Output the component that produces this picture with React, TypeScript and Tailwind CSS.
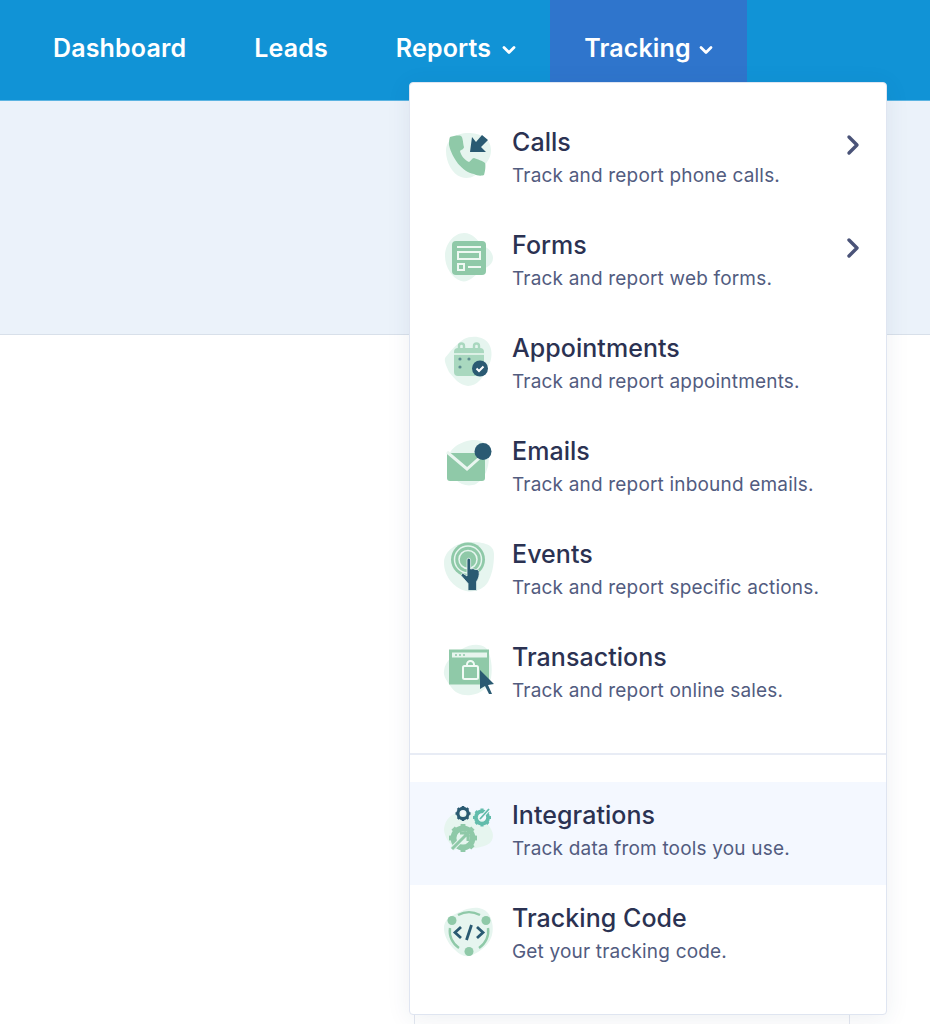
import React from "react";

const font = { fontFamily: "Inter, 'Noto Sans', sans-serif" };
const G = "#8fc9a8";
const D = "#2a5a72";
const B = "#e6f5ef";

const Chevron = ({ className }: { className: string }) => (
  <svg width="14" height="10" viewBox="0 0 14 10" className={className} fill="none" stroke="white" strokeWidth="2.8" strokeLinecap="round" strokeLinejoin="round">
    <path d="M2 2.5 L7 7.5 L12 2.5" />
  </svg>
);

const Right = () => (
  <svg width="16" height="22" viewBox="0 0 16 22" fill="none" stroke="#4a5378" strokeWidth="3.4" strokeLinecap="round" strokeLinejoin="round">
    <path d="M4 3 L12 11 L4 19" />
  </svg>
);

const Svg = ({ children }: { children: React.ReactNode }) => (
  <svg width="50" height="50" viewBox="0 0 50 50" className="overflow-visible">
    {children}
  </svg>
);

const Phone = () => (
  <Svg>
    <path d="M2 20C2 9 12 2 24 2c12 0 23 5 23 17 0 9-5 13-10 20-5 6-12 10-20 7C8 43 2 31 2 20z" fill={B} />
    <path d="M6 6c3-1 9-2 11-1 2 1 2 8 3 11 0 2-3 3-4 4 1 5 5 9 9 11 2-1 3-4 5-4 3 1 9 3 11 5 1 3 0 9-1 12-2 1-7 1-10-1C18 41 8 27 5 14c0-3 0-6 1-8z" fill={G} />
    <path d="M38 4l6 5-7 7 5 5H26l2-15 4 5z" fill={D} />
  </Svg>
);

const Form = () => (
  <Svg>
    <path d="M1 22C1 10 10 -1 20 -1c9 0 13 7 17 11 5 3 12 7 12 14 0 8-9 10-14 14-5 5-11 11-18 9C8 44 1 33 1 22z" fill={B} />
    <rect x="8" y="7" width="34" height="34" rx="4" fill={G} />
    <path d="M13 13h24" stroke="#eef8f2" strokeWidth="2" />
    <rect x="14" y="18" width="22" height="7" fill="none" stroke="#eef8f2" strokeWidth="2" />
    <rect x="14" y="30" width="6" height="6" fill="none" stroke="#eef8f2" strokeWidth="2" />
    <path d="M24 33h13" stroke="#eef8f2" strokeWidth="2" />
  </Svg>
);

const Cal = () => (
  <Svg>
    <path d="M1 21C5 16 12 7 20 2c8-4 20-3 25 5 4 7 3 16-1 23-4 10-11 19-20 19-9-1-14-8-19-14C3 30 0 25 1 21z" fill={B} />
    <rect x="10" y="11" width="30" height="28" rx="4" fill="#a9d8bf" />
    <path d="M15 13V9a2.5 2.5 0 015 0v4M30 13V9a2.5 2.5 0 015 0v4" fill="none" stroke="#a9d8bf" strokeWidth="2.4" />
    <path d="M10 17h30" stroke="#eef8f2" strokeWidth="1.5" />
    <circle cx="16" cy="22" r="1.6" fill={D} opacity=".6" />
    <circle cx="25" cy="22" r="1.6" fill={D} opacity=".6" />
    <circle cx="16" cy="30" r="1.6" fill={D} opacity=".6" />
    <circle cx="36" cy="31.5" r="8" fill={D} />
    <path d="M32.5 31.5l2.5 2.5 4.5-4.5" fill="none" stroke="white" strokeWidth="2" />
  </Svg>
);

const Mail = () => (
  <Svg>
    <path d="M3 24C3 10 14 2 28 0c11-1 17 5 17 15 0 12-3 23-13 29-7 3-15 1-20-4C7 35 3 32 3 24z" fill={B} />
    <path d="M3 13l38 0v25a3 3 0 01-3 3H6a3 3 0 01-3-3z" fill={G} />
    <path d="M3 12l20 17L41 13" fill="none" stroke="#eaf6f0" strokeWidth="3" />
    <circle cx="39" cy="11.5" r="8.5" fill={D} />
  </Svg>
);

const Events = () => (
  <Svg>
    <path d="M0 20C0 7 14 -1 26 -1c10 0 24 1 24 12 0 12 -2 20-6 28-4 7-14 11-22 9C9 45 0 32 0 20z" fill={B} />
    <circle cx="24" cy="16.5" r="17" fill={G} />
    <circle cx="24" cy="16.5" r="13.5" fill="none" stroke="#e6f5ef" strokeWidth="1.5" />
    <circle cx="24" cy="16.5" r="9" fill="none" stroke="#e6f5ef" strokeWidth="1.5" />
    <path d="M23 17a1.8 1.8 0 013.6 0v9l2.5-.5 2 1 2.5 0 1.5 2c.5 4-.5 7-2.5 10v9H24v-7l-7-8 1.5-2.5 4.5 3z" fill={D} stroke="#e6f5ef" strokeWidth="0.8" />
  </Svg>
);

const Shop = () => (
  <Svg>
    <path d="M0 25C1 14 10 10 18 3c8-5 18-6 24-1 5 6 7 20 5 30-2 9-10 16-20 17-9 1-16-2-20-8C3 35 -1 30 0 25z" fill={B} />
    <rect x="5" y="3.5" width="40" height="35" fill={G} />
    <rect x="8" y="6.5" width="35" height="5" fill="#e8f5ee" />
    <circle cx="12" cy="9" r="1" fill={G} />
    <circle cx="16" cy="9" r="1" fill={G} />
    <circle cx="20" cy="9" r="1" fill={G} />
    <rect x="19" y="20" width="15" height="13" rx="1.5" fill="none" stroke="#f1faf5" strokeWidth="2" />
    <path d="M23 20v-1.5a3.5 3.5 0 017 0V20" fill="none" stroke="#f1faf5" strokeWidth="2" />
    <path d="M36 24l14 14-6 1 4 9-3 0-4-8-5 3z" fill={D} />
  </Svg>
);

const Gear = ({ x, y, r, c, hole }: { x: number; y: number; r: number; c: string; hole: string }) => (
  <g transform={`translate(${x} ${y})`}>
    <circle r={r * 0.68} fill="none" stroke={c} strokeWidth={r * 0.42} />
    {[0, 45, 90, 135, 180, 225, 270, 315].map((a) => (
      <rect key={a} x={-r * 0.17} y={-r} width={r * 0.34} height={r * 0.36} fill={c} transform={`rotate(${a})`} />
    ))}
    <circle r={r * 0.28} fill={hole} />
  </g>
);

const Integ = () => (
  <Svg>
    <path d="M0 25C1 15 8 9 16 8c10-2 20 2 26 10 6 7 10 14 4 21-8 6-20 5-29 6C9 46 0 34 0 25z" fill={B} />
    <Gear x={19} y={9.5} r={7.5} c={D} hole="#f4f8ff" />
    <Gear x={38} y={13.5} r={9} c="#62bcab" hole="#f4f8ff" />
    <path d="M36 15l9-10" stroke="#f4f8ff" strokeWidth="3.5" />
    <path d="M36 15l9-10" stroke="#62bcab" strokeWidth="1.8" />
    <Gear x={19} y={34} r={14} c={G} hole="#e6f5ef" />
    <path d="M8 45l16-16" stroke="#e6f5ef" strokeWidth="5" />
    <path d="M8 45l16-16M16 29h8v8" stroke={G} strokeWidth="3" fill="none" />
  </Svg>
);

const Code = () => (
  <Svg>
    <path d="M0 19C2 9 12 7 20 3c8-3 18-4 24 3 4 6 6 14 4 22-2 8-8 13-14 17-5 3-11 6-16 3C10 44 -1 32 0 19z" fill={B} />
    <path d="M14 8a24 24 0 0122 0M6 21a20 20 0 009 20M44 21a20 20 0 01-9 20" fill="none" stroke={G} strokeWidth="2.4" />
    <circle cx="8" cy="13.5" r="4.5" fill={G} />
    <circle cx="42" cy="13.5" r="4.5" fill={G} />
    <circle cx="25" cy="44.5" r="4.5" fill={G} />
    <path d="M17 20l-6 5.5 6 5.5M33 20l6 5.5-6 5.5M27.5 18l-5 15" fill="none" stroke={D} strokeWidth="2.8" />
  </Svg>
);

const items = [
  { t: "Calls", d: "Track and report phone calls.", I: Phone, arrow: true },
  { t: "Forms", d: "Track and report web forms.", I: Form, arrow: true },
  { t: "Appointments", d: "Track and report appointments.", I: Cal },
  { t: "Emails", d: "Track and report inbound emails.", I: Mail },
  { t: "Events", d: "Track and report specific actions.", I: Events },
  { t: "Transactions", d: "Track and report online sales.", I: Shop },
];

const Row = ({ t, d, I, arrow, active }: { t: string; d: string; I: () => React.ReactNode; arrow?: boolean; active?: boolean }) => (
  <div className={`flex h-[103px] items-center pl-[34px] pr-[25px] ${active ? "bg-[#f4f8ff]" : ""}`}>
    <div className="w-[50px] h-[50px] shrink-0 mb-[10px]">
      <I />
    </div>
    <div className="ml-[18px] flex-1 pb-[6px]">
      <div className="text-[25px] leading-[32px] font-medium text-[#2b3252] tracking-[0.05px]">{t}</div>
      <div className="text-[19px] leading-[28px] mt-[4px] text-[#525c7f] tracking-[0.18px]">{d}</div>
    </div>
    {arrow && (
      <div className="self-start mt-[25px]">
        <Right />
      </div>
    )}
  </div>
);

const navItem = "h-[100px] flex items-start pt-[31px] px-[34px] leading-[34px]";

export default function App() {
  return (
    <div className="relative w-[930px] h-[1024px] overflow-hidden bg-white" style={font}>
      <nav className="flex h-[101px] bg-[#1193d6] border-b border-b-[#5bb4e2] pl-[19px] text-white text-[25px] font-semibold tracking-[0.15px]">
        <div className={navItem}>Dashboard</div>
        <div className={navItem}>Leads</div>
        <div className={navItem}>
          Reports
          <span className="h-[34px] flex items-center"><Chevron className="ml-[11px] mt-[3px]" /></span>
        </div>
        <div className={`${navItem} bg-[#2f75cc]`}>
          Tracking
          <span className="h-[34px] flex items-center"><Chevron className="ml-[8px] mt-[3px]" /></span>
        </div>
      </nav>
      <div className="h-[234px] bg-[#ebf2fa] border-b border-b-[#d8e0ea]" />

      <div className="absolute left-[414px] top-[1000px] w-[436px] h-[40px] border-x border-x-[#e3e7f0]" />

      <div className="absolute left-[409px] top-[82px] w-[478px] h-[933px] bg-white border border-[#dfe5f1] rounded-[4px] shadow-[0_4px_24px_rgba(40,60,100,0.08)] overflow-hidden">
        <div className="pt-[26px]">
          {items.map((it) => (
            <Row key={it.t} {...it} />
          ))}
        </div>
        <div className="mt-[26px] border-t-2 border-t-[#e8ecf5] pt-[27px]">
          <Row t="Integrations" d="Track data from tools you use." I={Integ} active />
          <Row t="Tracking Code" d="Get your tracking code." I={Code} />
        </div>
      </div>
    </div>
  );
}
